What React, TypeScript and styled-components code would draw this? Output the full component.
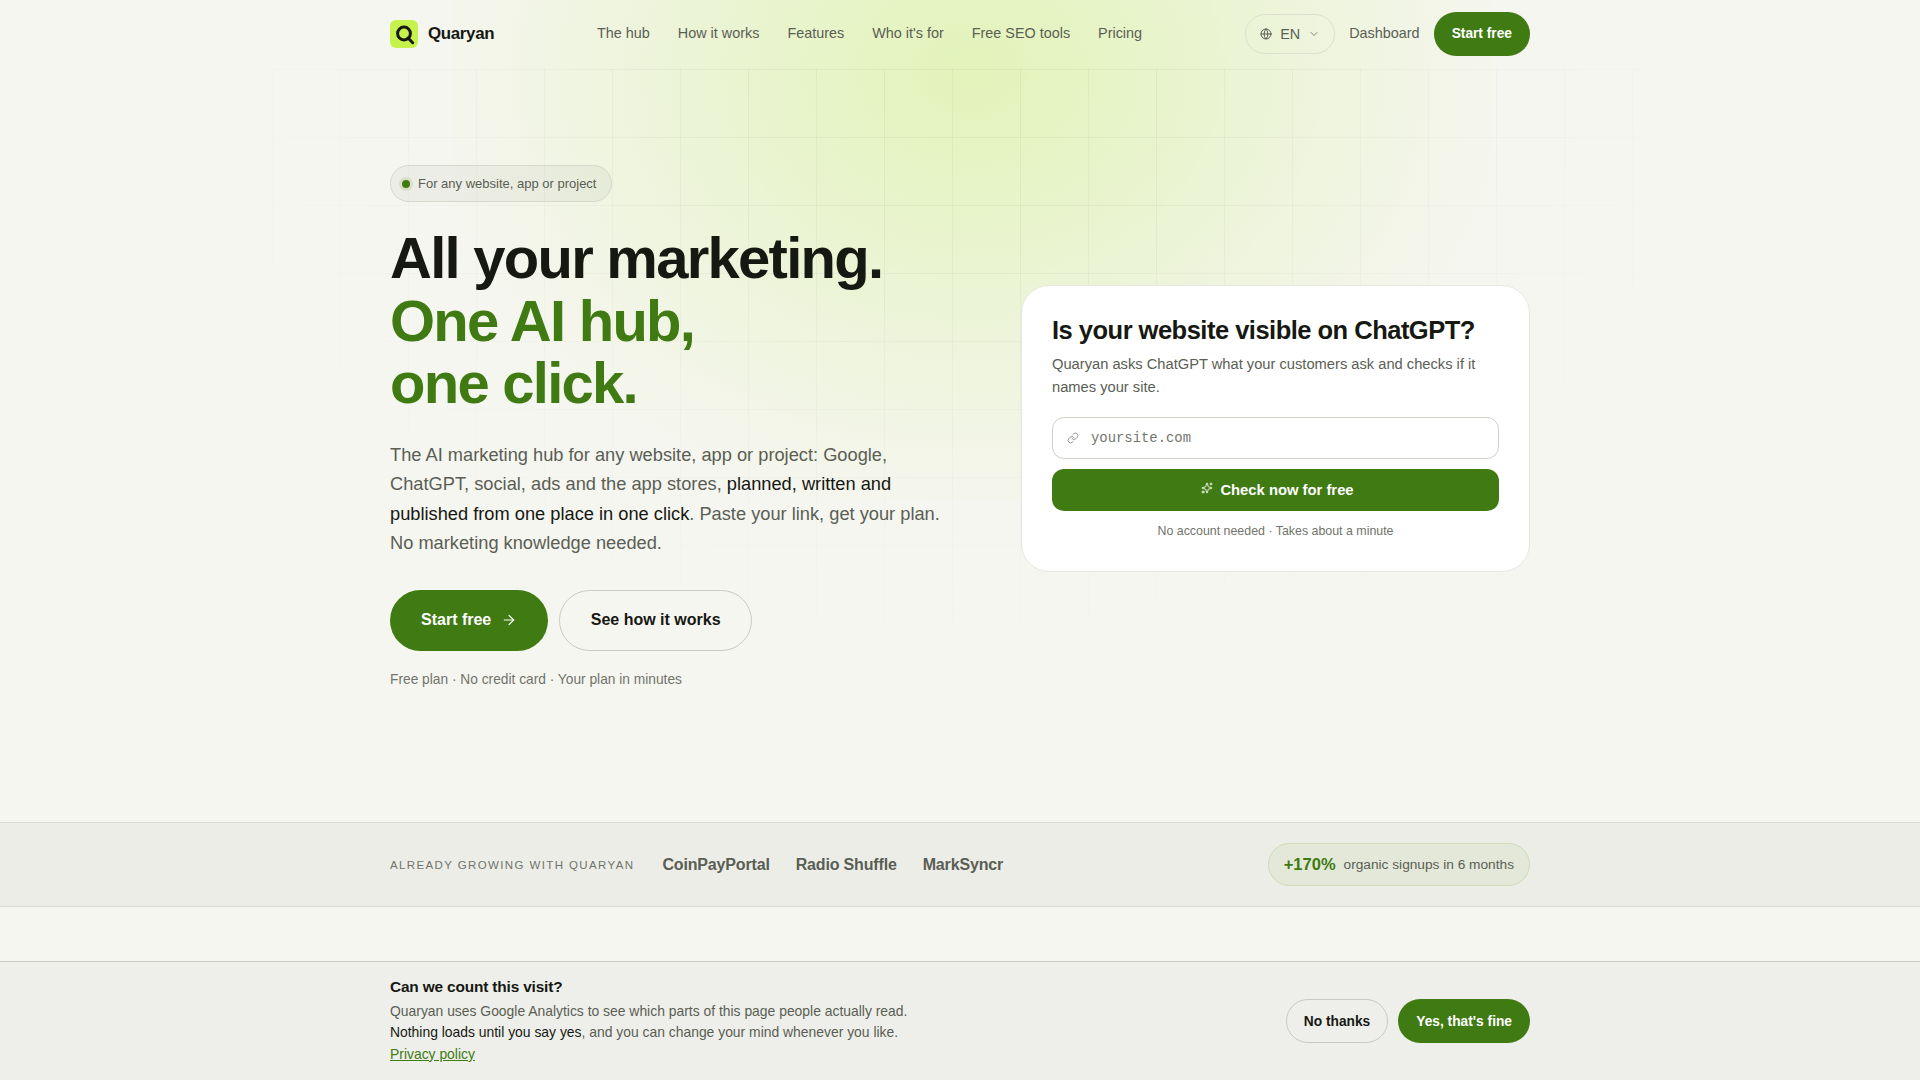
import styled, { createGlobalStyle } from "styled-components";
import { ArrowRight, ChevronDown, Globe, Link, Sparkles } from "lucide-react";

const GlobalStyle = createGlobalStyle`
    * {
        box-sizing: border-box;
    }

    html,
    body {
        margin: 0;
        min-height: 100%;
        background: #f6f6f1;
        color: #161812;
        font-family: "Liberation Sans", Arial, sans-serif;
    }
`;

const green = "#3f7a12";
const muted = "#5a5e54";

const Page = styled.div`
    position: relative;
    min-height: 1080px;
    overflow: hidden;
`;

const Glow = styled.div`
    position: absolute;
    top: -360px;
    left: calc(50% + 12px);
    width: 1040px;
    height: 860px;
    transform: translateX(-50%);
    background: radial-gradient(
        ellipse at center,
        rgba(200, 240, 110, 0.42) 0%,
        rgba(200, 238, 115, 0.3) 25%,
        rgba(200, 236, 120, 0.15) 50%,
        rgba(200, 236, 120, 0) 78%
    );
    pointer-events: none;
`;

const GridLines = styled.div`
    position: absolute;
    top: 69px;
    left: 0;
    right: 0;
    height: 640px;
    background-image:
        linear-gradient(to right, rgba(22, 24, 18, 0.04) 1px, transparent 1px),
        linear-gradient(to bottom, rgba(22, 24, 18, 0.04) 1px, transparent 1px);
    background-size: 68px 68px;
    mask-image: radial-gradient(ellipse 820px 620px at 50% 0, #000 30%, transparent 100%);
    pointer-events: none;
`;

const Container = styled.div`
    position: relative;
    width: 1140px;
    margin: 0 auto;
`;

const NavBar = styled(Container)`
    display: flex;
    align-items: center;
    height: 69px;
    padding-bottom: 2px;
`;

const Brand = styled.div`
    display: flex;
    align-items: center;
    gap: 10px;
    width: 207px;
    font-size: 16.9px;
    font-weight: 700;
    letter-spacing: -0.02em;
`;

const LogoMark = styled.svg`
    width: 28px;
    height: 28px;
`;

const NavLinks = styled.div`
    display: flex;
    gap: 28px;
    flex: 1;
`;

const NavLink = styled.a`
    padding-bottom: 2px;
    font-size: 14.4px;
    color: ${muted};
`;

const NavRight = styled.div`
    display: flex;
    align-items: center;
    gap: 14px;
`;

const LangButton = styled.div`
    display: flex;
    align-items: center;
    gap: 8px;
    height: 40px;
    padding: 0 14px;
    border: 1px solid #dcdfd0;
    border-radius: 999px;
    font-size: 14.4px;
    color: ${muted};
`;

const PrimarySmall = styled.button`
    height: 44px;
    padding: 0 18px;
    border: 0;
    border-radius: 999px;
    background: ${green};
    color: #fff;
    font: 700 13.75px "Liberation Sans", Arial, sans-serif;
`;

const Hero = styled(Container)`
    display: grid;
    grid-template-columns: 1fr 509px;
    align-items: center;
    gap: 64px;
    padding: 96px 0 130.5px;
`;

const HeroCopy = styled.div`
    display: flex;
    flex-direction: column;
    align-items: flex-start;
    padding-bottom: 5px;
`;

const Badge = styled.div`
    display: flex;
    align-items: center;
    gap: 5px;
    height: 37px;
    padding: 0 15px 0 8px;
    border: 1px solid #d6d8cc;
    border-radius: 999px;
    background: rgba(22, 24, 18, 0.04);
    font-size: 13px;
    color: ${muted};
`;

const BadgeDot = styled.span`
    width: 14px;
    height: 14px;
    border: 3.5px solid #d9dfc9;
    border-radius: 50%;
    background: ${green};
`;

const Headline = styled.h1`
    margin: 25px 0 0;
    font-size: 58px;
    line-height: 62.5px;
    font-weight: 700;
    letter-spacing: -0.03em;
`;

const Accent = styled.span`
    display: block;
    color: ${green};
`;

const Lead = styled.p`
    width: 560px;
    margin: 25px 0 0;
    font-size: 18.25px;
    line-height: 29.5px;
    color: ${muted};
`;

const Strong = styled.span`
    color: #161812;
`;

const HeroActions = styled.div`
    display: flex;
    gap: 11px;
    margin-top: 32px;
`;

const HeroButton = styled.button<{ $outline?: boolean }>`
    display: flex;
    align-items: center;
    gap: 10px;
    height: 61px;
    padding: 0 ${(p) => (p.$outline ? "30.5px" : "31px")};
    border: ${(p) => (p.$outline ? "1px solid #c9cbc2" : "0")};
    border-radius: 999px;
    background: ${(p) => (p.$outline ? "transparent" : green)};
    color: ${(p) => (p.$outline ? "#161812" : "#fff")};
    font: 700 16px "Liberation Sans", Arial, sans-serif;
`;

const HeroNote = styled.p`
    margin: 21px 0 0;
    font-size: 13.75px;
    color: #71746b;
`;

const CheckCard = styled.div`
    padding: 29px 30px 30px;
    height: 287px;
    border: 1px solid #e6e7e0;
    border-radius: 28px;
    background: #fff;
`;

const CardTitle = styled.h2`
    margin: 0;
    font-size: 25.5px;
    line-height: 30px;
    font-weight: 700;
    letter-spacing: -0.02em;
`;

const CardText = styled.p`
    margin: 8px 0 0;
    font-size: 14.7px;
    line-height: 23px;
    color: ${muted};
`;

const UrlField = styled.div`
    display: flex;
    align-items: center;
    gap: 12px;
    height: 42px;
    margin-top: 18px;
    padding: 0 14px;
    border: 1px solid #cfd1c9;
    border-radius: 12px;
    font: 13.9px "Liberation Mono", monospace;
    color: #73766d;
`;

const CheckButton = styled.button`
    display: flex;
    align-items: center;
    justify-content: center;
    gap: 7px;
    width: 100%;
    height: 42px;
    margin-top: 10px;
    border: 0;
    border-radius: 12px;
    background: ${green};
    color: #fff;
    font: 700 14.8px "Liberation Sans", Arial, sans-serif;
`;

const SparkIcon = styled(Sparkles)`
    margin: 0 0 3px 4px;
`;

const CardNote = styled.p`
    margin: 12px 0 0;
    text-align: center;
    font-size: 12.4px;
    line-height: 16px;
    color: #71746b;
`;

const Band = styled.section`
    height: 85px;
    border-top: 1px solid #d9dad3;
    border-bottom: 1px solid #d9dad3;
    background: #ecede7;
`;

const BandRow = styled(Container)`
    display: flex;
    align-items: center;
    height: 100%;
`;

const BandLabel = styled.span`
    margin-right: 28px;
    font-size: 11.5px;
    letter-spacing: 0.12em;
    text-transform: uppercase;
    color: #71746b;
`;

const Client = styled.span`
    margin-right: 26px;
    font-size: 16px;
    font-weight: 700;
    letter-spacing: -0.01em;
    color: ${muted};
`;

const Stat = styled.div`
    display: flex;
    align-items: center;
    gap: 8px;
    height: 43px;
    margin-left: auto;
    padding: 0 15px;
    border: 1px solid #cfdcb4;
    border-radius: 999px;
    background: #e4e8d9;
    font-size: 13.7px;
    color: ${muted};
`;

const StatValue = styled.b`
    font-size: 16.5px;
    color: ${green};
`;

const CookieBar = styled.aside`
    position: fixed;
    left: 0;
    right: 0;
    bottom: 0;
    height: 119px;
    border-top: 1px solid #c9cac3;
    background: #eeefea;
`;

const CookieRow = styled(Container)`
    display: flex;
    align-items: center;
    justify-content: space-between;
    height: 100%;
`;

const CookieTitle = styled.div`
    font-size: 15.4px;
    line-height: 20px;
    font-weight: 700;
    letter-spacing: -0.01em;
`;

const CookieText = styled.p`
    margin: 4px 0 0;
    font-size: 13.9px;
    line-height: 21.6px;
    color: ${muted};
`;

const PrivacyLink = styled.a`
    color: ${green};
    text-decoration: underline;
`;

const CookieActions = styled.div`
    display: flex;
    gap: 10px;
`;

const OutlineSmall = styled(PrimarySmall)`
    padding: 0 17px;
    border: 1px solid #c9cac3;
    background: transparent;
    color: #161812;
`;

const navItems = ["The hub", "How it works", "Features", "Who it's for", "Free SEO tools", "Pricing"];
const clients = ["CoinPayPortal", "Radio Shuffle", "MarkSyncr"];

const App = () => {
    return (
        <Page>
            <GlobalStyle />
            <Glow />
            <GridLines />

            <NavBar as="nav">
                <Brand>
                    <LogoMark viewBox="0 0 28 28">
                        <rect width="28" height="28" rx="6" fill="#c6f24e" />
                        <circle cx="14" cy="13.5" r="6.4" fill="none" stroke="#161812" strokeWidth="3" />
                        <path d="M18 18 L22.7 22.7" stroke="#161812" strokeWidth="3" strokeLinecap="round" />
                    </LogoMark>
                    Quaryan
                </Brand>
                <NavLinks>
                    {navItems.map((item) => (
                        <NavLink key={item}>{item}</NavLink>
                    ))}
                </NavLinks>
                <NavRight>
                    <LangButton>
                        <Globe size={12} />
                        EN
                        <ChevronDown size={12} strokeWidth={1.5} />
                    </LangButton>
                    <NavLink>Dashboard</NavLink>
                    <PrimarySmall>Start free</PrimarySmall>
                </NavRight>
            </NavBar>

            <Hero>
                <HeroCopy>
                    <Badge>
                        <BadgeDot />
                        For any website, app or project
                    </Badge>
                    <Headline>
                        All your marketing.
                        <Accent>One AI hub,</Accent>
                        <Accent>one click.</Accent>
                    </Headline>
                    <Lead>
                        The AI marketing hub for any website, app or project: Google, ChatGPT, social, ads and the app
                        stores, <Strong>planned, written and published from one place in one click</Strong>. Paste your
                        link, get your plan. No marketing knowledge needed.
                    </Lead>
                    <HeroActions>
                        <HeroButton>
                            Start free
                            <ArrowRight size={16} strokeWidth={1.75} />
                        </HeroButton>
                        <HeroButton $outline>See how it works</HeroButton>
                    </HeroActions>
                    <HeroNote>Free plan · No credit card · Your plan in minutes</HeroNote>
                </HeroCopy>

                <CheckCard>
                    <CardTitle>Is your website visible on ChatGPT?</CardTitle>
                    <CardText>Quaryan asks ChatGPT what your customers ask and checks if it names your site.</CardText>
                    <UrlField>
                        <Link size={12} strokeWidth={1.5} />
                        yoursite.com
                    </UrlField>
                    <CheckButton>
                        <SparkIcon size={12} strokeWidth={1.75} />
                        Check now for free
                    </CheckButton>
                    <CardNote>No account needed · Takes about a minute</CardNote>
                </CheckCard>
            </Hero>

            <Band>
                <BandRow>
                    <BandLabel>Already growing with Quaryan</BandLabel>
                    {clients.map((client) => (
                        <Client key={client}>{client}</Client>
                    ))}
                    <Stat>
                        <StatValue>+170%</StatValue>
                        organic signups in 6 months
                    </Stat>
                </BandRow>
            </Band>

            <CookieBar>
                <CookieRow>
                    <div>
                        <CookieTitle>Can we count this visit?</CookieTitle>
                        <CookieText>
                            Quaryan uses Google Analytics to see which parts of this page people actually read.
                            <br />
                            <Strong>Nothing loads until you say yes</Strong>, and you can change your mind whenever you
                            like.
                            <br />
                            <PrivacyLink>Privacy policy</PrivacyLink>
                        </CookieText>
                    </div>
                    <CookieActions>
                        <OutlineSmall>No thanks</OutlineSmall>
                        <PrimarySmall>Yes, that's fine</PrimarySmall>
                    </CookieActions>
                </CookieRow>
            </CookieBar>
        </Page>
    );
};

export default App;
